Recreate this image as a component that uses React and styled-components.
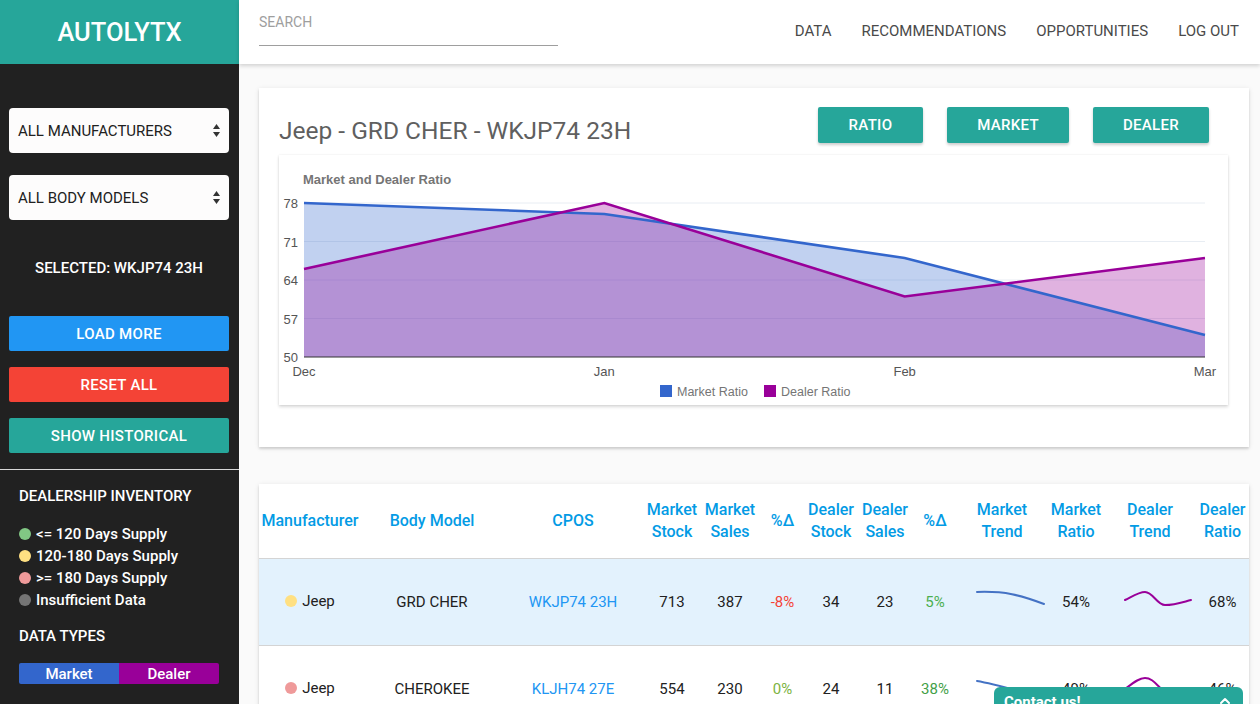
import React from "react";
import styled, { createGlobalStyle } from "styled-components";
import { ChevronUp } from "lucide-react";

const GlobalStyle = createGlobalStyle`
  * {
    box-sizing: border-box;
  }

  html,
  body {
    margin: 0;
    height: 100%;
    overflow: hidden;
  }

  body {
    font-family: Roboto, "Noto Sans", Arial, sans-serif;
    background: #fafafa;
  }
`;

const Layout = styled.div`
  display: flex;
  height: 100vh;
`;

const Sidebar = styled.aside`
  width: 239px;
  flex-shrink: 0;
  background: #212121;
  display: flex;
  flex-direction: column;
  color: #fff;
`;

const Logo = styled.div`
  height: 64px;
  background: #26a69a;
  display: flex;
  align-items: center;
  justify-content: center;
  font-size: 25.5px;
  font-weight: 500;
`;

const Controls = styled.div`
  padding: 44px 10px 16px 9px;
  display: flex;
  flex-direction: column;
`;

const SelectBox = styled.div`
  height: 45px;
  background: #fdfcfc;
  border-radius: 4px;
  padding: 0 9px;
  display: flex;
  align-items: center;
  justify-content: space-between;
  color: #212121;
  font-size: 15px;
  margin-bottom: 22px;
`;

const Selected = styled.div`
  text-align: center;
  font-size: 15px;
  font-weight: 500;
  line-height: 18px;
  margin: 17px 0 39px;
`;

const SideButton = styled.button`
  height: 35px;
  border: none;
  border-radius: 2px;
  background: ${(p) => p.$bg};
  color: #fff;
  font-family: inherit;
  font-size: 15px;
  font-weight: 500;
  letter-spacing: 0.3px;
  margin-bottom: 16px;
  &:last-child {
    margin-bottom: 0;
  }
`;

const Divider = styled.hr`
  margin: 0;
  border: none;
  border-top: 1px solid #d8d8d8;
`;

const Legend = styled.div`
  padding: 17px 20px 0 19px;
`;

const SideHeading = styled.div`
  font-size: 15px;
  font-weight: 500;
  line-height: 18px;
  margin-bottom: 18px;
`;

const SupplyList = styled.ul`
  list-style: none;
  margin: 0 0 16px;
  padding: 0;
`;

const LegendItem = styled.li`
  display: flex;
  align-items: center;
  gap: 5px;
  font-size: 15px;
  font-weight: 500;
  line-height: 22px;
`;

const Dot = styled.span`
  width: 12px;
  height: 12px;
  border-radius: 50%;
  background: ${(p) => p.$color};
  display: inline-block;
  flex-shrink: 0;
`;

const TypeBar = styled.div`
  display: flex;
  width: 200px;
  height: 21px;
  border-radius: 2px;
  overflow: hidden;
`;

const TypeCell = styled.div`
  flex: 1;
  background: ${(p) => p.$bg};
  display: flex;
  align-items: center;
  justify-content: center;
  font-size: 15px;
  font-weight: 500;
`;

const Content = styled.div`
  flex: 1;
  display: flex;
  flex-direction: column;
  min-width: 0;
`;

const TopBar = styled.header`
  height: 64px;
  background: #fff;
  display: flex;
  position: relative;
  z-index: 2;
  box-shadow: 0 2px 4px rgba(0, 0, 0, 0.16);
  padding: 0 21px 0 20px;
`;

const Search = styled.input`
  width: 299px;
  height: 46px;
  border: none;
  border-bottom: 1px solid #9e9e9e;
  padding: 11px 0 12px;
  font-family: inherit;
  font-size: 14px;
  outline: none;
  background: transparent;
  &::placeholder {
    color: #9e9e9e;
  }
`;

const Nav = styled.nav`
  margin-left: auto;
  display: flex;
  align-items: center;
  gap: 30px;
  height: 62px;
`;

const NavLink = styled.a`
  font-size: 15px;
  color: #4a4a4a;
  text-decoration: none;
`;

const Main = styled.main`
  flex: 1;
  overflow: hidden;
  padding: 24px 11px 0 20px;
`;

const Card = styled.section`
  background: #fff;
  box-shadow: 0 2px 2px rgba(0, 0, 0, 0.12), 0 1px 5px rgba(0, 0, 0, 0.1);
  padding: ${(p) => p.$pad};
  margin-bottom: 37px;
`;

const CardHeader = styled.div`
  display: flex;
  justify-content: space-between;
  align-items: flex-start;
`;

const Title = styled.h2`
  margin: 0;
  font-size: 24.5px;
  font-weight: 400;
  line-height: 48px;
  color: #5f5f5f;
`;

const ButtonGroup = styled.div`
  display: flex;
  gap: 24px;
  margin-right: 19px;
`;

const ChartButton = styled.button`
  height: 36px;
  padding: 0 ${(p) => p.$pad}px;
  border: none;
  border-radius: 2px;
  background: #26a69a;
  color: #fff;
  font-family: inherit;
  font-size: 15px;
  font-weight: 500;
  letter-spacing: 0.3px;
  box-shadow: 0 2px 3px rgba(0, 0, 0, 0.2);
`;

const ChartBox = styled.div`
  height: 250px;
  background: #fff;
  box-shadow: 0 2px 3px rgba(0, 0, 0, 0.15), 0 0 2px rgba(0, 0, 0, 0.08);
  svg {
    display: block;
  }
`;

const Table = styled.table`
  width: 100%;
  border-collapse: collapse;
  table-layout: fixed;
`;

const Th = styled.th`
  height: 74px;
  padding: 0 2px;
  font-size: 16px;
  font-weight: 500;
  line-height: 22px;
  color: #039be5;
  text-align: center;
  vertical-align: middle;
`;

const Tr = styled.tr`
  height: 87px;
  border-top: 1px solid #d4d4d4;
  background: ${(p) => (p.$active ? "#e3f2fd" : "#fff")};
`;

const Td = styled.td`
  text-align: center;
  vertical-align: middle;
  font-size: 15px;
  color: ${(p) => p.$color || "#212121"};
  padding: ${(p) => (p.$trend ? "0 0 0 18px" : "0")};
  svg {
    display: block;
    margin: 0 auto;
  }
`;

const Make = styled.span`
  display: inline-flex;
  align-items: center;
  gap: 5px;
`;

const Contact = styled.div`
  position: fixed;
  right: 17px;
  bottom: -24px;
  width: 249px;
  height: 41px;
  background: #26a69a;
  border-radius: 6px 6px 0 0;
  color: #fff;
  font-size: 15px;
  font-weight: 700;
  display: flex;
  justify-content: space-between;
  padding: 6px 10px 0;
  z-index: 5;
`;

const widths = [102, 142, 140, 58, 58, 47, 50, 58, 42, 92, 56, 92, 53];

const headers = [
  ["Manufacturer"],
  ["Body Model"],
  ["CPOS"],
  ["Market", "Stock"],
  ["Market", "Sales"],
  ["%Δ"],
  ["Dealer", "Stock"],
  ["Dealer", "Sales"],
  ["%Δ"],
  ["Market", "Trend"],
  ["Market", "Ratio"],
  ["Dealer", "Trend"],
  ["Dealer", "Ratio"],
];

const rows = [
  {
    dot: "#ffe082",
    body: "GRD CHER",
    cpos: "WKJP74 23H",
    marketStock: 713,
    marketSales: 387,
    marketPct: ["-8%", "#f44336"],
    dealerStock: 34,
    dealerSales: 23,
    dealerPct: ["5%", "#4caf50"],
    marketTrend: "M2 3 C 30 2, 45 6, 69 15",
    marketRatio: "54%",
    dealerTrend: "M2 11 C 10 7, 16 3, 22 3 C 30 3, 34 16, 42 16 C 52 16, 60 13, 68 11",
    dealerRatio: "68%",
    active: true,
  },
  {
    dot: "#ef9a9a",
    body: "CHEROKEE",
    cpos: "KLJH74 27E",
    marketStock: 554,
    marketSales: 230,
    marketPct: ["0%", "#7cb342"],
    dealerStock: 24,
    dealerSales: 11,
    dealerPct: ["38%", "#43a047"],
    marketTrend: "M2 5 C 20 8, 40 14, 69 22",
    marketRatio: "49%",
    dealerTrend: "M2 13 C 10 7, 16 2, 22 2 C 30 2, 34 10, 42 16 C 52 22, 60 21, 68 19",
    dealerRatio: "46%",
  },
];

const supply = [
  ["#81c784", "<= 120 Days Supply"],
  ["#ffe082", "120-180 Days Supply"],
  ["#ef9a9a", ">= 180 Days Supply"],
  ["#757575", "Insufficient Data"],
];

function SelectArrows() {
  return (
    <svg width="7" height="13" viewBox="0 0 7 13">
      <polygon points="0,5 3.5,0 7,5" fill="#333" />
      <polygon points="0,8 3.5,13 7,8" fill="#333" />
    </svg>
  );
}

function Sparkline({ d, color }) {
  return (
    <svg width="72" height="26" viewBox="0 0 72 26">
      <path d={d} fill="none" stroke={color} strokeWidth="2" strokeLinecap="round" />
    </svg>
  );
}

// chart geometry, relative to the chart box
const left = 25;
const step = 300.33;
const yOf = (v) => 202 - (v - 50) * 5.5;
const market = [78, 76, 68, 54];
const dealer = [66, 78, 61, 68];
const months = ["Dec", "Jan", "Feb", "Mar"];

function series(values) {
  return values.map((v, i) => `${left + i * step},${yOf(v)}`).join(" ");
}

function area(values) {
  const last = left + (values.length - 1) * step;
  return `${left},202 ${series(values)} ${last},202`;
}

function RatioChart() {
  const font = '"Liberation Sans", Arial, sans-serif';
  return (
    <svg width="949" height="250" fontFamily={font}>
      <text x="24" y="29" fontSize="13" fontWeight="700" fill="#757575">
        Market and Dealer Ratio
      </text>
      {[78, 71, 64, 57].map((v) => (
        <line key={v} x1={left} x2="926" y1={yOf(v)} y2={yOf(v)} stroke="#e8edf3" />
      ))}
      <polygon points={area(market)} fill="#3366cc" fillOpacity="0.3" />
      <polygon points={area(dealer)} fill="#990099" fillOpacity="0.3" />
      <polyline points={series(market)} fill="none" stroke="#3366cc" strokeWidth="2.6" />
      <polyline points={series(dealer)} fill="none" stroke="#990099" strokeWidth="2.6" />
      <line x1={left} x2="926" y1="202" y2="202" stroke="#333" />
      {[78, 71, 64, 57, 50].map((v) => (
        <text key={v} x="19" y={yOf(v) + 5} fontSize="13" fill="#555" textAnchor="end">
          {v}
        </text>
      ))}
      {months.map((m, i) => (
        <text key={m} x={left + i * step} y="221" fontSize="13" fill="#555" textAnchor="middle">
          {m}
        </text>
      ))}
      <rect x="381" y="230" width="12" height="12" fill="#3366cc" />
      <text x="398" y="241" fontSize="12.5" fill="#757575">Market Ratio</text>
      <rect x="485" y="230" width="12" height="12" fill="#990099" />
      <text x="502" y="241" fontSize="12.5" fill="#757575">Dealer Ratio</text>
    </svg>
  );
}

export default function App() {
  return (
    <>
      <GlobalStyle />
      <Layout>
        <Sidebar>
          <Logo>AUTOLYTX</Logo>
          <Controls>
            <SelectBox>
              ALL MANUFACTURERS
              <SelectArrows />
            </SelectBox>
            <SelectBox>
              ALL BODY MODELS
              <SelectArrows />
            </SelectBox>
            <Selected>SELECTED: WKJP74 23H</Selected>
            <SideButton $bg="#2196f3">LOAD MORE</SideButton>
            <SideButton $bg="#f44336">RESET ALL</SideButton>
            <SideButton $bg="#26a69a">SHOW HISTORICAL</SideButton>
          </Controls>
          <Divider />
          <Legend>
            <SideHeading>DEALERSHIP INVENTORY</SideHeading>
            <SupplyList>
              {supply.map(([color, label]) => (
                <LegendItem key={label}>
                  <Dot $color={color} />
                  {label}
                </LegendItem>
              ))}
            </SupplyList>
            <SideHeading>DATA TYPES</SideHeading>
            <TypeBar>
              <TypeCell $bg="#3366cc">Market</TypeCell>
              <TypeCell $bg="#990099">Dealer</TypeCell>
            </TypeBar>
          </Legend>
        </Sidebar>

        <Content>
          <TopBar>
            <Search placeholder="SEARCH" />
            <Nav>
              <NavLink>DATA</NavLink>
              <NavLink>RECOMMENDATIONS</NavLink>
              <NavLink>OPPORTUNITIES</NavLink>
              <NavLink>LOG OUT</NavLink>
            </Nav>
          </TopBar>

          <Main>
            <Card $pad="19px 21px 42px 20px">
              <CardHeader>
                <Title>Jeep - GRD CHER - WKJP74 23H</Title>
                <ButtonGroup>
                  <ChartButton $pad={31}>RATIO</ChartButton>
                  <ChartButton $pad={30}>MARKET</ChartButton>
                  <ChartButton $pad={30}>DEALER</ChartButton>
                </ButtonGroup>
              </CardHeader>
              <ChartBox>
                <RatioChart />
              </ChartBox>
            </Card>

            <Card $pad="0">
              <Table>
                <colgroup>
                  {widths.map((w, i) => (
                    <col key={i} style={{ width: w }} />
                  ))}
                </colgroup>
                <thead>
                  <tr>
                    {headers.map((lines, i) => (
                      <Th key={i}>
                        {lines.map((l, j) => (
                          <div key={j}>{l}</div>
                        ))}
                      </Th>
                    ))}
                  </tr>
                </thead>
                <tbody>
                  {rows.map((r) => (
                    <Tr key={r.cpos} $active={r.active}>
                      <Td>
                        <Make>
                          <Dot $color={r.dot} />
                          Jeep
                        </Make>
                      </Td>
                      <Td>{r.body}</Td>
                      <Td $color="#2196f3">{r.cpos}</Td>
                      <Td>{r.marketStock}</Td>
                      <Td>{r.marketSales}</Td>
                      <Td $color={r.marketPct[1]}>{r.marketPct[0]}</Td>
                      <Td>{r.dealerStock}</Td>
                      <Td>{r.dealerSales}</Td>
                      <Td $color={r.dealerPct[1]}>{r.dealerPct[0]}</Td>
                      <Td $trend>
                        <Sparkline d={r.marketTrend} color="#4472c4" />
                      </Td>
                      <Td>{r.marketRatio}</Td>
                      <Td $trend>
                        <Sparkline d={r.dealerTrend} color="#990099" />
                      </Td>
                      <Td>{r.dealerRatio}</Td>
                    </Tr>
                  ))}
                </tbody>
              </Table>
            </Card>
          </Main>
        </Content>
      </Layout>
      <Contact>
        Contact us!
        <ChevronUp size={16} strokeWidth={3} />
      </Contact>
    </>
  );
}
